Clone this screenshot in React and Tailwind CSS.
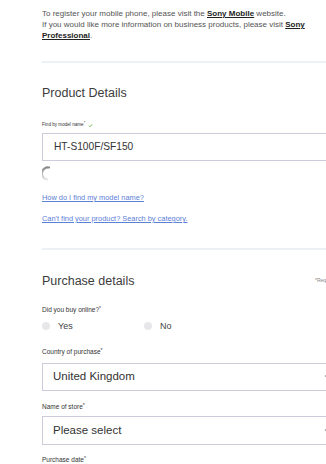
import React from 'react'

const font = { fontFamily: '"Liberation Sans", Arial, sans-serif' }

function Label({ children, className = '' }) {
  return (
    <div className={`text-[6.5px] leading-[8px] text-[#333] ${className}`}>
      {children}
      <sup className="text-[5px]">*</sup>
    </div>
  )
}

function Chevron() {
  return (
    <svg width="8" height="6" viewBox="0 0 8 6" className="ml-auto mr-[39px] shrink-0">
      <path d="M1 1.5 L4 4.5 L7 1.5" fill="none" stroke="#999" strokeWidth="1.2" />
    </svg>
  )
}

function Select({ value, className = '' }) {
  return (
    <div className={`flex items-center h-[28px] border border-[#cfcbdb] pl-[10px] text-[11.5px] text-[#333] ${className}`}>
      <span>{value}</span>
      <Chevron />
    </div>
  )
}

function Radio({ label }) {
  return (
    <div className="flex items-center">
      <span className="w-[8px] h-[8px] rounded-full bg-[#e7e7ea]" />
      <span className="ml-[8px] text-[9px] leading-[10px] text-[#444]">{label}</span>
    </div>
  )
}

export default function App() {
  return (
    <div className="w-[326px] h-[464px] overflow-hidden bg-white" style={font}>
      <div className="ml-[42px] w-[330px] pt-[8px]">
        <p className="text-[8px] leading-[11px] text-[#555] w-[274px]">
          To register your mobile phone, please visit the{' '}
          <a className="font-bold text-[#222] underline">Sony Mobile</a> website.
          <br />
          If you would like more information on business products, please visit{' '}
          <a className="font-bold text-[#222] underline">Sony Professional</a>.
        </p>

        <div className="mt-[20px] h-[2px] bg-[#edf0f4]" />

        <h2 className="mt-[22px] text-[12.5px] leading-[16px] text-[#3c3c3c]">Product Details</h2>

        <div className="mt-[20px] flex items-center h-[8px] text-[4.6px] leading-[8px] text-[#333]">
          <span>Find by model name<sup className="text-[4px]">*</sup></span>
          <svg width="5" height="5" viewBox="0 0 6 6" className="ml-[3px]">
            <path d="M1 3.2 L2.4 4.6 L5 1.4" fill="none" stroke="#6bb544" strokeWidth="1" />
          </svg>
        </div>

        <div className="mt-[4px] flex items-center h-[28px] border border-[#cfcbdb] pl-[11px] text-[10.2px] text-[#333]">
          HT-S100F/SF150
        </div>

        <svg width="12" height="15" viewBox="0 0 12 15" className="mt-[5px]">
          <defs>
            <linearGradient id="sp" x1="0" y1="0" x2="0" y2="1">
              <stop offset="0" stopColor="#8a8a8a" />
              <stop offset="1" stopColor="#e6e6e6" />
            </linearGradient>
          </defs>
          <path d="M7 1.5 A6 6 0 0 0 5 13.5" fill="none" stroke="url(#sp)" strokeWidth="2.2" strokeLinecap="round" />
        </svg>

        <a className="block mt-[12px] text-[7.4px] leading-[10px] text-[#5c80d6] underline">How do I find my model name?</a>
        <a className="block mt-[11px] text-[7.4px] leading-[10px] text-[#5c80d6] underline">Can't find your product? Search by category.</a>

        <div className="mt-[24px] h-[2px] bg-[#edf0f4]" />

        <div className="mt-[23px] flex items-center h-[16px]">
          <h2 className="text-[12.5px] leading-[16px] text-[#3c3c3c]">Purchase details</h2>
          <span className="ml-auto w-[57px] shrink-0 whitespace-nowrap text-[5px] text-[#888]">*Required fields</span>
        </div>

        <Label className="mt-[17px]">Did you buy online?</Label>
        <div className="mt-[7px] flex items-center h-[10px]">
          <div className="w-[102px]"><Radio label="Yes" /></div>
          <Radio label="No" />
        </div>

        <Label className="mt-[17px]">Country of purchase</Label>
        <Select value="United Kingdom" className="mt-[7px]" />

        <Label className="mt-[12px]">Name of store</Label>
        <Select value="Please select" className="mt-[5px] h-[29px]" />

        <Label className="mt-[11px]">Purchase date</Label>
      </div>
    </div>
  )
}
